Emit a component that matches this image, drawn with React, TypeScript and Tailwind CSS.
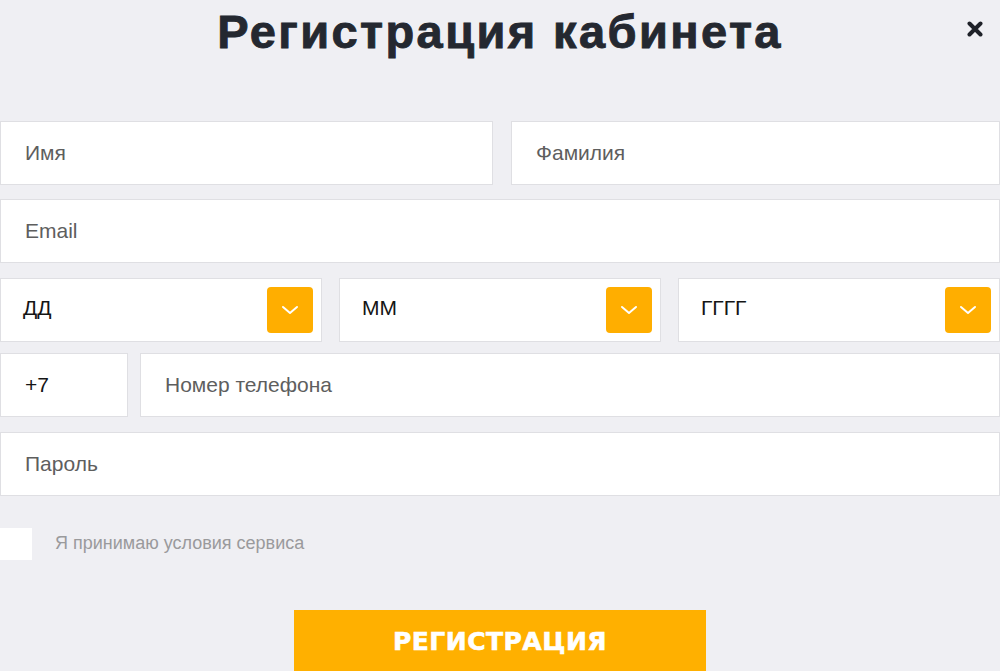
import { useState } from "react";

function ChevronButton() {
  return (
    <div className="w-[46px] h-[46px] rounded-[4px] bg-[#ffae00] flex items-center justify-center">
      <svg width="18" height="10" viewBox="0 0 18 10" fill="none">
        <path d="M2 2 L9 8 L16 2" stroke="#fff" strokeWidth="2" strokeLinecap="round" strokeLinejoin="round" />
      </svg>
    </div>
  );
}

function Field({ label, value, className }: { label: string; value?: boolean; className?: string }) {
  return (
    <div
      className={
        "h-[64px] bg-white border border-[#dfdfe3] flex items-center pl-6 text-[21px] " +
        (value ? "text-[#151515] " : "text-[#5e5e5e] ") +
        (className ?? "")
      }
    >
      {label}
    </div>
  );
}

function DateSelect({ label }: { label: string }) {
  return (
    <div className="flex-1 h-[64px] bg-white border border-[#dfdfe3] flex items-center justify-between pl-[22px] pr-2 text-[21px] text-[#151515]">
      <span className="-mt-1">{label}</span>
      <ChevronButton />
    </div>
  );
}

export default function App() {
  const [accepted, setAccepted] = useState(false);

  return (
    <div className="relative w-full h-[671px] overflow-hidden bg-[#efeff3] font-['Liberation_Sans',Arial,sans-serif]">
      <button className="absolute right-[16px] top-[20px] w-[18px] h-[18px] flex items-center justify-center">
        <svg width="16" height="16" viewBox="0 0 16 16">
          <path d="M2.5 2.5 L13.5 13.5 M13.5 2.5 L2.5 13.5" stroke="#1e2128" strokeWidth="4" strokeLinecap="round" />
        </svg>
      </button>

      <h1 className="pt-[4px] h-[60px] text-center text-[47px] font-bold leading-[56px] text-[#242830] tracking-[2.4px] [-webkit-text-stroke:0.9px_#242830]">
        Регистрация кабинета
      </h1>

      <div className="mt-[61px] flex flex-col">
        <div className="flex gap-[18px]">
          <Field label="Имя" className="w-[493px]" />
          <Field label="Фамилия" className="flex-1" />
        </div>

        <Field label="Email" className="mt-[14px]" />

        <div className="mt-[15px] flex gap-[17px]">
          <DateSelect label="ДД" />
          <DateSelect label="ММ" />
          <DateSelect label="ГГГГ" />
        </div>

        <div className="mt-[11px] flex gap-[12px]">
          <Field label="+7" value className="w-[128px]" />
          <Field label="Номер телефона" className="flex-1" />
        </div>

        <Field label="Пароль" className="mt-[15px]" />

        <label className="mt-[32px] flex items-center gap-[23px] cursor-pointer">
          <span
            onClick={() => setAccepted(!accepted)}
            className="w-[32px] h-[32px] bg-white flex items-center justify-center text-[#ffae00]"
          >
            {accepted ? "✓" : ""}
          </span>
          <span className="text-[18px] text-[#9a9a9c] -mt-[1px]">Я принимаю условия сервиса</span>
        </label>

        <div className="mt-[50px] flex justify-center">
          <button className="w-[412px] h-[64px] bg-[#ffb000] text-white text-[25px] font-bold font-['DejaVu_Sans',sans-serif] tracking-[0.5px] [-webkit-text-stroke:0.6px_#fff]">
            РЕГИСТРАЦИЯ
          </button>
        </div>
      </div>
    </div>
  );
}
